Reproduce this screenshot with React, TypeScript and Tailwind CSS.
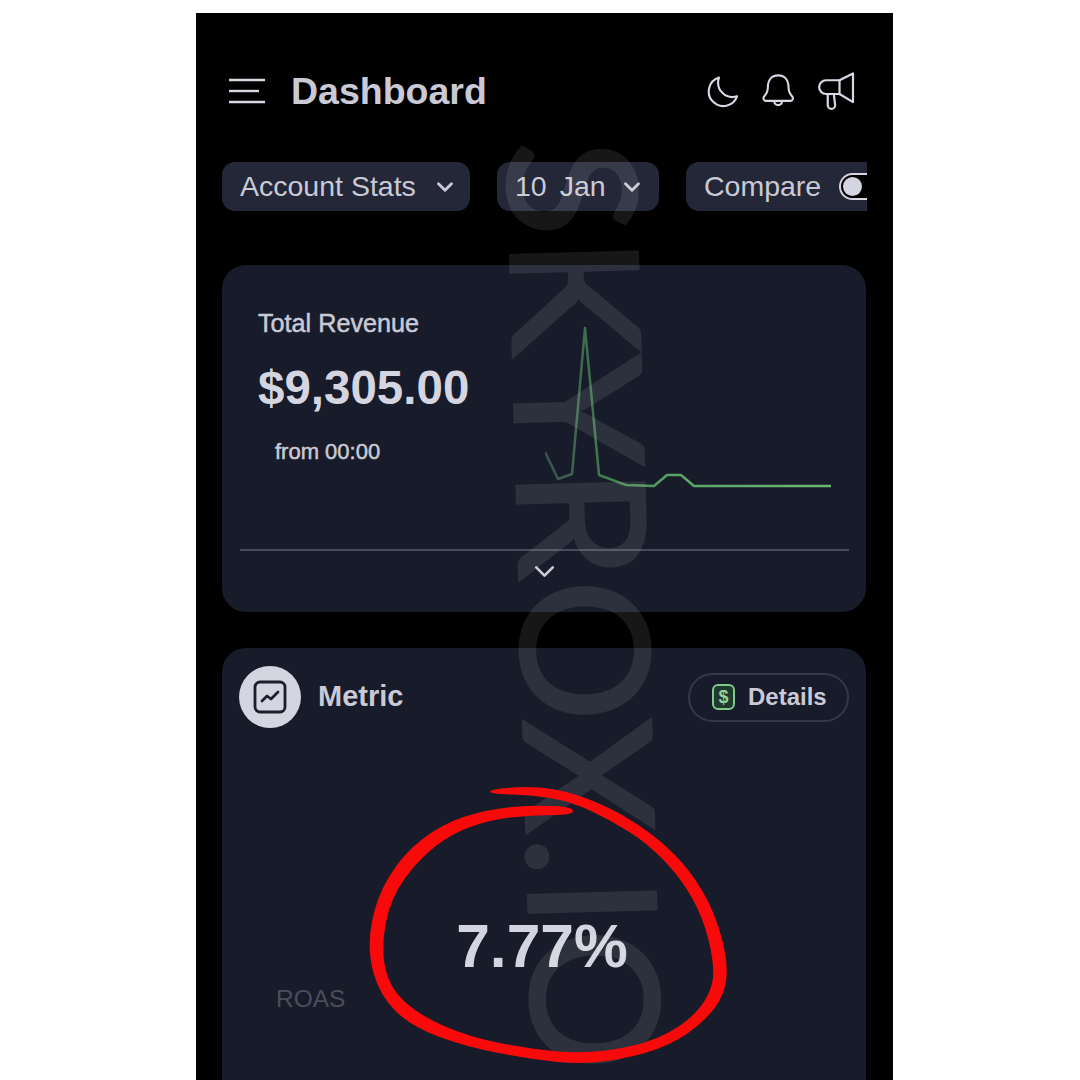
import { ChevronDown } from 'lucide-react'

const font = "font-['Liberation_Sans',Arial,sans-serif]"

// chart points, already in card pixels
const chartPoints = '0,131 13,158 27,153 40,7 54,154 81,164 109,165 122,154 136,154 149,165 286,165'

// edge of the hand drawn circle, out and back again
const scribble: [number, number][] = [
  [490, 789], [535, 786], [574, 793], [617, 811], [658, 838], [691, 871], [716, 915], [729, 967],
  [722, 1002], [690, 1034], [648, 1054], [585, 1065], [530, 1059], [467, 1047], [412, 1027],
  [380, 996], [367, 950], [376, 898], [403, 854], [442, 824], [488, 809], [535, 805], [573, 807],
  [573, 815], [531, 815], [490, 820], [453, 833], [420, 858], [391, 897], [381, 947], [389, 987],
  [419, 1015], [469, 1037], [531, 1049], [585, 1054], [647, 1044], [688, 1022], [710, 995],
  [715, 967], [703, 917], [680, 877], [647, 843], [610, 820], [572, 802], [533, 795], [490, 794],
]

function smoothPath(points: [number, number][]) {
  const last = points[points.length - 1]
  let d = `M${(last[0] + points[0][0]) / 2} ${(last[1] + points[0][1]) / 2}`
  points.forEach((p, i) => {
    const next = points[(i + 1) % points.length]
    d += `Q${p[0]} ${p[1]} ${(p[0] + next[0]) / 2} ${(p[1] + next[1]) / 2}`
  })
  return d + 'Z'
}

function MenuIcon() {
  return (
    <svg width="38" height="26" viewBox="0 0 38 26" fill="none" stroke="#d8d9e4" strokeWidth="2.4">
      <path d="M1 2h36" />
      <path d="M1 13h30" />
      <path d="M1 24h36" />
    </svg>
  )
}

function MoonIcon() {
  return (
    <svg width="33" height="33" viewBox="42 42 102 102" fill="none" stroke="#d8d9e4" strokeWidth="6.5" strokeLinejoin="round">
      <path d="M82 50A45 45 0 1 0 138 108C105 118 70 90 82 50Z" />
    </svg>
  )
}

function BellIcon() {
  return (
    <svg width="33" height="35" viewBox="208 40 102 108" fill="none" stroke="#d8d9e4" strokeWidth="6.5" strokeLinejoin="round" strokeLinecap="round">
      <path d="M258 44c-22 0-32 17-32 38 0 16-6 22-12 28-3 4-1 13 5 13h78c6 0 8-9 5-13-6-6-12-12-12-28 0-21-10-38-32-38Z" />
      <path d="M246 124a12 12 0 0 0 24 0" />
    </svg>
  )
}

function MegaphoneIcon() {
  return (
    <svg width="37" height="38" viewBox="386 36 110 112" fill="none" stroke="#d8d9e4" strokeWidth="6.5" strokeLinejoin="round" strokeLinecap="round">
      <path d="M410 60h40l40-20v85l-40-24h-40a19 19 0 0 1 0-41Z" />
      <path d="M450 60v41" />
      <path d="M415 102v32a11 11 0 0 0 22 0l-4-33" />
    </svg>
  )
}

function Chip({ children, className }: { children: React.ReactNode; className: string }) {
  return (
    <div className={`flex h-[49px] shrink-0 items-center rounded-[13px] bg-[#232738] text-[28.5px] text-[#c9cad6] ${className}`}>
      {children}
    </div>
  )
}

function RevenueChart() {
  return (
    <svg width="286" height="170" viewBox="0 0 286 170" fill="none">
      <defs>
        <linearGradient id="line" x1="0" y1="0" x2="286" y2="0" gradientUnits="userSpaceOnUse">
          <stop offset="0" stopColor="#3a5250" />
          <stop offset="0.2" stopColor="#3f7a4c" />
          <stop offset="0.45" stopColor="#59a565" />
          <stop offset="1" stopColor="#68b872" />
        </linearGradient>
      </defs>
      <polyline points={chartPoints} stroke="url(#line)" strokeWidth="2.5" strokeLinejoin="round" />
    </svg>
  )
}

export default function App() {
  return (
    <div className={`h-screen w-screen overflow-hidden bg-white pl-[196px] pt-[13px] ${font}`}>
      <div className="relative h-[1067px] w-[697px] overflow-hidden bg-black">
        {/* Header */}
        <div className="mt-[58px] flex h-10 items-center pl-[32px] pr-[38px]">
          <MenuIcon />
          <h1 className="ml-[25px] text-[37.5px] font-bold text-[#c9cad6]">Dashboard</h1>
          <div className="ml-auto flex items-center gap-[23px]">
            <MoonIcon />
            <BellIcon />
            <MegaphoneIcon />
          </div>
        </div>

        {/* Filters */}
        <div className="ml-[26px] mt-[51px] flex w-[645px] gap-[27px] overflow-hidden">
          <Chip className="w-[248px] pl-[18px]">
            Account Stats
            <ChevronDown size={26} strokeWidth={2.6} className="ml-[16px]" />
          </Chip>
          <Chip className="w-[162px] pl-[18px]">
            <span>10</span>
            <span className="ml-[13px]">Jan</span>
            <ChevronDown size={26} strokeWidth={2.6} className="ml-[13px]" />
          </Chip>
          <Chip className="w-[240px] pl-[18px]">
            Compare
            <span className="ml-[18px] flex h-[27px] w-[50px] shrink-0 items-center rounded-full border-[2.5px] border-[#d4d5e0] bg-black pl-[2px]">
              <span className="h-[19px] w-[19px] rounded-full bg-[#d4d5e0]" />
            </span>
          </Chip>
        </div>

        {/* Total revenue */}
        <div className="ml-[26px] mt-[54px] h-[347px] w-[644px] rounded-[24px] bg-[#181b29]">
          <div className="flex h-[284px]">
            <div className="w-[323px] pl-[36px] pt-[44px] text-[#c9cad6]">
              <p className="text-[25.2px] leading-7 [-webkit-text-stroke:0.5px_#c9cad6]">Total Revenue</p>
              <p className="mt-[24px] text-[47.5px] font-bold leading-[54px] text-[#d4d5e0]">$9,305.00</p>
              <p className="ml-[17px] mt-[23px] text-[22px] leading-7 [-webkit-text-stroke:0.5px_#c9cad6]">from 00:00</p>
            </div>
            <div className="pt-[56px]">
              <RevenueChart />
            </div>
          </div>
          <div className="ml-[18px] mr-[17px] h-[2px] bg-[#474a5a]" />
          <div className="flex justify-center pt-[4px]">
            <ChevronDown size={33} strokeWidth={2} className="text-[#c9cad6]" />
          </div>
        </div>

        {/* Metric */}
        <div className="ml-[26px] mt-[36px] h-[500px] w-[644px] rounded-[24px] bg-[#181b29] px-[17px] pt-[18px]">
          <div className="flex items-center">
            <div className="flex h-[62px] w-[62px] items-center justify-center rounded-full bg-[#d4d5e0]">
              <svg width="34" height="34" viewBox="0 0 34 34" fill="none" stroke="#1b1e2b" strokeWidth="2.8" strokeLinejoin="round" strokeLinecap="round">
                <rect x="2" y="2" width="30" height="30" rx="5" />
                <path d="M9 21l5-5 4 3 7-7" />
              </svg>
            </div>
            <span className="ml-[17px] text-[29px] font-bold text-[#c9cad6]">Metric</span>
            <button className="ml-auto flex h-[49px] w-[161px] items-center rounded-full border-2 border-[#353846] pl-[22px] text-[24px] font-bold text-[#c9cad6]">
              <span className="flex h-[26px] w-[23px] items-center justify-center rounded-[6px] border-2 border-[#7fc98a] bg-[#1f3a2c] text-[18px] font-bold text-[#8fd39b]">
                $
              </span>
              <span className="ml-[13px]">Details</span>
            </button>
          </div>
          <div className="mt-[183px] grid grid-cols-3 items-end">
            <span className="pl-[37px] text-[24.5px] leading-[30px] text-[#4a4d5c]">ROAS</span>
            <span className="mb-[33px] translate-x-[-2px] whitespace-nowrap text-center text-[60.5px] font-bold leading-[70px] text-[#d4d5e0]">7.77%</span>
          </div>
        </div>

        {/* Watermark */}
        <div className="pointer-events-none absolute left-[469px] top-[124px] origin-top-left rotate-[88.4deg] whitespace-nowrap font-['Lato',sans-serif] text-[178px] font-normal leading-none tracking-[1px] text-white opacity-[.09] [-webkit-text-stroke:2.5px_white]">
          SKYROX.IO
        </div>

        {/* Red hand drawn circle */}
        <svg className="pointer-events-none absolute left-0 top-0" width="697" height="1067" viewBox="196 13 697 1067">
          <path fill="#f80a0a" d={smoothPath(scribble)} />
        </svg>
      </div>
    </div>
  )
}
